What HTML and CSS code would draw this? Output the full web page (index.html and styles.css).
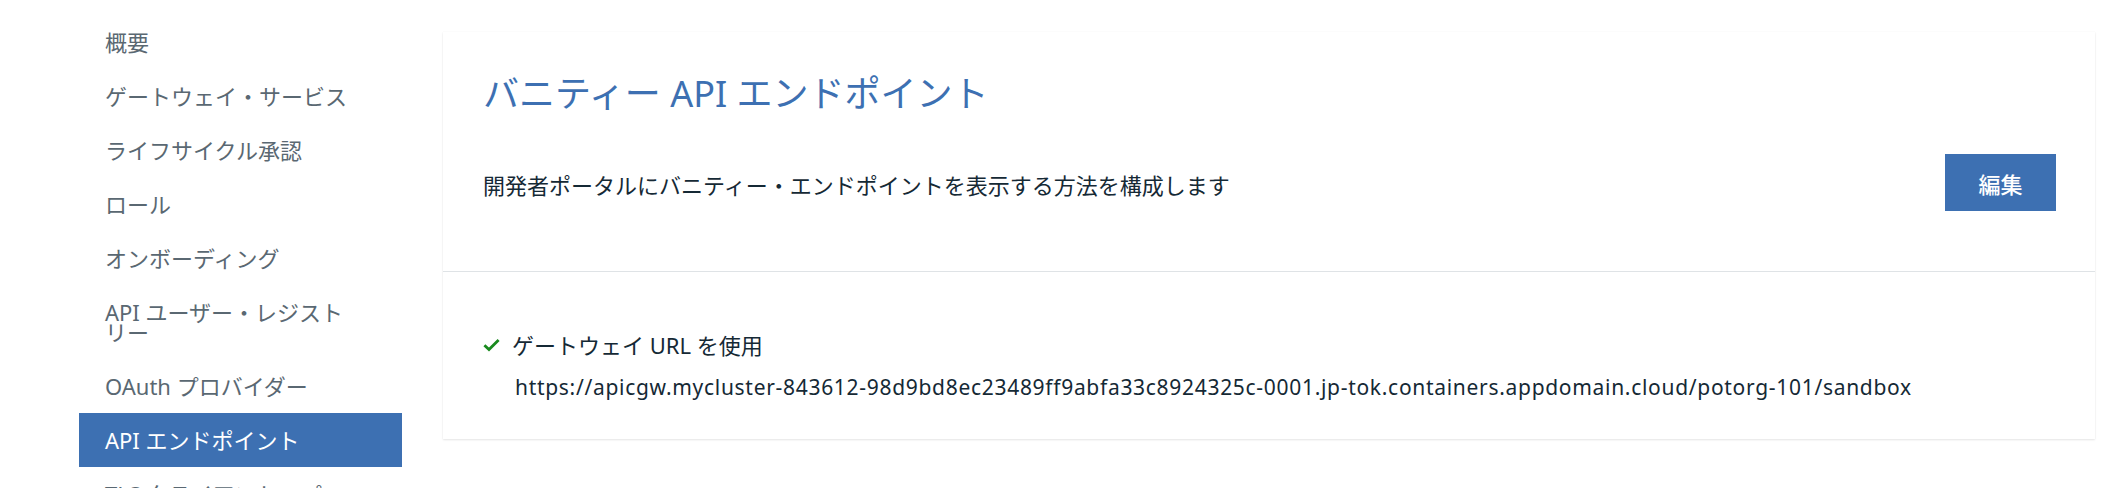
FILE: index.html
```html
<!DOCTYPE html>
<html lang="ja">
<head>
<meta charset="utf-8">
<title>API エンドポイント</title>
<link rel="stylesheet" href="styles.css">
</head>
<body>
<div class="page">
  <nav class="sidebar">
    <ul class="nav-list">
      <li class="nav-item">概要</li>
      <li class="nav-item">ゲートウェイ・サービス</li>
      <li class="nav-item">ライフサイクル承認</li>
      <li class="nav-item">ロール</li>
      <li class="nav-item">オンボーディング</li>
      <li class="nav-item">API ユーザー・レジストリー</li>
      <li class="nav-item">OAuth プロバイダー</li>
      <li class="nav-item active">API エンドポイント</li>
      <li class="nav-item">TLS クライアント・プロファイル</li>
    </ul>
  </nav>
  <main class="content">
    <section class="card">
      <div class="card-head">
        <h1 class="card-title">バニティー API エンドポイント</h1>
        <div class="card-row">
          <p class="card-desc">開発者ポータルにバニティー・エンドポイントを表示する方法を構成します</p>
          <button class="btn-primary" type="button">編集</button>
        </div>
      </div>
      <div class="card-body">
        <div class="status">
          <svg class="check" width="17" height="14" viewBox="0 0 17 14" aria-hidden="true">
            <path d="M1.4 7.2 L6 11.6 L15.6 2" fill="none" stroke="#198a1e" stroke-width="2.8" stroke-linecap="butt" stroke-linejoin="miter"/>
          </svg>
          <span>ゲートウェイ URL を使用</span>
        </div>
        <div class="url">https://apicgw.mycluster-843612-98d9bd8ec23489ff9abfa33c8924325c-0001.jp-tok.containers.appdomain.cloud/potorg-101/sandbox</div>
      </div>
    </section>
  </main>
</div>
</body>
</html>
```

FILE: styles.css
```css
html, body {
  margin: 0;
  padding: 0;
  background: #ffffff;
}

body {
  font-family: "Noto Sans", "Noto Sans CJK JP", sans-serif;
  color: #152935;
  overflow: hidden;
  height: 488px;
}

.page {
  display: flex;
  align-items: flex-start;
}

.sidebar {
  width: 443px;
  flex: 0 0 443px;
}

.nav-list {
  list-style: none;
  margin: 0;
  padding: 15px 41px 0 79px;
}

.nav-item {
  padding: 17px 52px 17px 26px;
  font-size: 22px;
  line-height: 20px;
  color: #5a6872;
}

.nav-item.active {
  background: #3d70b2;
  color: #ffffff;
}

.content {
  flex: 1;
  padding: 32px 19px 0 0;
}

.card {
  background: #ffffff;
  box-shadow: 0 1px 2px rgba(0, 0, 0, 0.10), 0 0 1px rgba(0, 0, 0, 0.06);
}

.card-head {
  padding: 40px 39px 60px 40px;
  border-bottom: 1px solid #dfe3e6;
}

.card-title {
  margin: 0;
  font-size: 36px;
  font-weight: 400;
  line-height: 44px;
  color: #3d70b2;
}

.card-row {
  display: flex;
  align-items: center;
  justify-content: space-between;
  margin-top: 38px;
}

.card-desc {
  margin: 5px 0 0 0;
  font-size: 22px;
  line-height: 28px;
  color: #152935;
}

.btn-primary {
  width: 111px;
  height: 57px;
  border: 0;
  background: #3d70b2;
  color: #ffffff;
  font-family: "Noto Sans CJK JP", sans-serif;
  font-size: 22px;
  font-weight: 500;
  padding: 0;
}

.card-body {
  padding: 59px 40px 38px 40px;
}

.status {
  display: flex;
  align-items: center;
  gap: 12px;
  font-size: 22px;
  line-height: 28px;
}

.check {
  display: block;
}

.url {
  margin-top: 14px;
  padding-left: 32px;
  font-size: 21px;
  letter-spacing: 0.7px;
  line-height: 28px;
}
```
